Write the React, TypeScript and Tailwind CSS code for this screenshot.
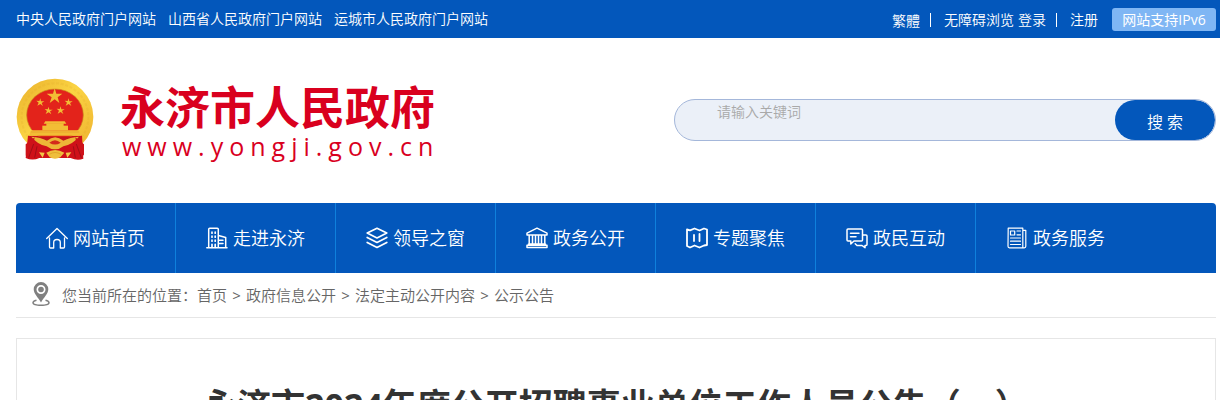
import type { ReactNode } from "react";

const portals = ["中央人民政府门户网站", "山西省人民政府门户网站", "运城市人民政府门户网站"];

function Emblem() {
  return (
    <svg width="78" height="82" viewBox="48 37 234 246" aria-hidden="true">
      <defs>
        <linearGradient id="gold" x1="0" y1="0" x2="1" y2="1">
          <stop offset="0" stopColor="#e9b02c" />
          <stop offset="0.45" stopColor="#fbd443" />
          <stop offset="1" stopColor="#eeb02e" />
        </linearGradient>
      </defs>
      <ellipse cx="165" cy="154" rx="115" ry="115" fill="url(#gold)" />
      <ellipse cx="165" cy="154" rx="100" ry="101" fill="none" stroke="#d99a20" strokeWidth="6" strokeDasharray="9 5" opacity="0.15" />
      <path d="M84 210 L246 210 L250 279 Q232 286 212 277 L118 277 Q98 286 77 277 Z" fill="#cf1019" />
      <ellipse cx="165" cy="148" rx="85" ry="78" fill="#e3231b" stroke="#c98a1b" strokeWidth="2" />
      <g fill="#f2bd35">
        <path d="M164 67 L169 84 L187 84 L173 95 L178 112 L164 101 L149 112 L155 95 L140 84 L159 84 Z" />
        <path id="small-star" d="M121 98 L123 107 L133 107 L125 112 L129 121 L121 115 L112 120 L116 111 L109 105 L118 106 Z" />
        <use href="#small-star" x="85" />
        <use href="#small-star" x="25" y="25" />
        <use href="#small-star" x="61" y="24" />
        <path d="M136 167 H194 L199 174 H131 Z" />
        <path d="M139 173 H191 V181 H139 Z" />
        <path d="M127 180 H204 V194 H127 Z" />
        <path d="M94 194 H236 L243 210 H87 Z" />
      </g>
      <path d="M92 199 H238" stroke="#e79a2a" strokeWidth="2" />
      <path d="M86 213 H245 L238 225 H92 Z" fill="#c4151b" />
      <path d="M94 213 Q122 215 141 225 Q165 204 190 225 Q210 215 237 213 Q218 236 190 242 Q177 252 165 251 Q153 252 140 242 Q113 237 94 213 Z" fill="#edb637" />
      <path d="M148 231 Q165 216 182 231 Q165 242 148 231 Z" fill="#d42a1b" />
      <path d="M77 236 L104 215 Q101 252 77 270 Z M252 236 L226 215 Q229 252 252 270 Z" fill="#ce1219" />
      <path d="M86 276 L101 235 M104 276 L111 242 M226 276 L220 242 M244 276 L229 235" stroke="#9f0e16" strokeWidth="3" />
      <path d="M117 260 L134 261 L128 276 Z M214 260 L197 261 L202 276 Z" fill="#f2c747" />
      <path d="M139 261 Q165 245 193 261 L181 275 Q165 283 149 275 Z" fill="#efbe3c" />
      <path d="M148 266 Q165 255 183 266" fill="none" stroke="#d99a20" strokeWidth="2" />
    </svg>
  );
}

function NavIcon({ children }: { children: ReactNode }) {
  return (
    <svg width="22" height="22" viewBox="0 0 22 22" fill="none" stroke="currentColor" strokeWidth="1.3" strokeLinejoin="round" strokeLinecap="round" aria-hidden="true">
      {children}
    </svg>
  );
}

const nav: { label: string; icon: ReactNode }[] = [
  {
    label: "网站首页",
    icon: <path d="M.7 11.5 11 1.5 21.3 11.5M3.5 10.8V20c0 .7.3 1 1 1h3.2v-5.5c0-2 1.2-3 3.3-3s3.3 1 3.3 3V21h3.2c.7 0 1-.3 1-1v-9.2" />,
  },
  {
    label: "走进永济",
    icon: (
      <>
        <path d="M.8 20.7H21M2.7 20.5V2.3c0-.7.3-1 1-1h7.6c.7 0 1 .3 1 1v18.2M12.5 8.500l7.200 2v10M13.500 13.200h3.500M13.500 16.500h3.500" strokeWidth="1.500" />
        <path d="M6 5.2v1M9.2 5.2v1M6 9.2v1M9.2 9.2v1M6 13.2v1M9.2 13.2v1M6 17.3v3M9.2 17.3v3" strokeWidth="1.7" />
      </>
    ),
  },
  {
    label: "领导之窗",
    icon: <path d="M11 1.3 20.8 6 11 11 1.2 6ZM1.2 10.5 11 15.5 20.8 10.5M1.2 15.5 11 20.5 20.8 15.5" strokeWidth="1.7" />,
  },
  {
    label: "政务公开",
    icon: <path d="M1 6.2 11 1.2 21 6.2V8H1ZM3.2 8v9M6.5 8v9M9.5 8v9M12.5 8v9M15.5 8v9M18.8 8v9M2.5 17h17M1 20.5v-2.2h20v2.2Z" strokeWidth="1.5" />,
  },
  {
    label: "专题聚焦",
    icon: <path d="M1 2.3 4 3.3 8.5 1.5l5 2 4.500-2 3 1V18l-3 .500-4.500 2-5-2-4.500 2L1 19ZM8 8v6M13.500 7v7" strokeWidth="1.8" />,
  },
  {
    label: "政民互动",
    icon: <path d="M2 2h13.5c.7 0 1 .3 1 1v10c0 .7-.3 1-1 1H8l-3.2 3v-3H2c-.7 0-1-.3-1-1V3c0-.7.3-1 1-1ZM4.5 6.2H13M4.5 9.8H10M16.7 8H20c.7 0 1 .3 1 1v8.5c0 .7-.3 1-1 1h-1v2.2l-3-2.2h-5l-1.8-1.7" strokeWidth="1.5" />,
  },
  {
    label: "政务服务",
    icon: <path d="M2.2 1.2h14.6V20.8H3.5c-1 0-1.5-.5-1.5-1.5ZM16.8 3.3h3v16c0 1-.5 1.5-1.5 1.5h-2M4.5 4h4.2v4H4.5ZM11 4h3.5M11 7.8h3.5M4.5 11h10M4.5 14.2h10M4.5 17.5h10" strokeWidth="1.2" />,
  },
];

function LocationIcon() {
  return (
    <svg width="18" height="24" viewBox="0 0 18 24" fill="#808080" aria-hidden="true">
      <path fillRule="evenodd" d="M9 0a7.3 7.3 0 0 0-7.3 7.3C1.7 11.5 6 15.5 9 20.5 12 15.5 16.3 11.5 16.3 7.3A7.3 7.3 0 0 0 9 0Zm0 3a4.500 4.500 0 1 1 0 9 4.500 4.500 0 0 1 0-9Z" />
      <circle cx="9" cy="7.5" r="2.8" />
      <path d="M4.5 18.3C2.5 18.8 1 19.6 1 20.8 1 22.3 4.5 23.3 9 23.3s8-1 8-2.5c0-1.2-1.5-2-3.5-2.5" fill="none" stroke="#808080" strokeWidth="1.5" />
    </svg>
  );
}

const crumbs = ["首页", "政府信息公开", "法定主动公开内容", "公示公告"];

export default function App() {
  return (
    <div className="bg-white font-['Open_Sans','Noto_Sans_CJK_SC',sans-serif] font-[350]">
      <div className="flex h-[38px] items-center justify-between bg-[#0357bb] pr-1 pl-4 text-sm text-white">
        <nav className="flex gap-3" aria-label="上级政府网站">
          {portals.map((p) => (
            <a key={p} href="#">{p}</a>
          ))}
        </nav>
        <div className="flex items-center pt-px">
          <a href="#" className="font-['Noto_Sans_CJK_TC',sans-serif] leading-5">繁體</a>
          <span className="ml-2.5 h-3.5 border-r border-white" />
          <a href="#" className="ml-[13px]">无障碍浏览</a>
          <a href="#" className="ml-1">登录</a>
          <span className="ml-2.5 h-3.5 border-r border-white" />
          <a href="#" className="ml-[13px]">注册</a>
          <a href="#" className="ml-3.5 flex h-[23px] w-[104px] items-center justify-center rounded-[3px] bg-[#7fb6f4] font-normal">网站支持IPv6</a>
        </div>
      </div>

      <div className="pr-1 pl-4">
        <header className="flex h-[165px] items-start justify-between">
          <a href="#" className="flex pt-10 text-[#d9001e]">
            <Emblem />
            <span className="flex flex-col pt-1 pl-[26px]">
              <span className="text-[45px] leading-[52px] font-bold">永济市人民政府</span>
              <span className="pl-0.5 text-[25px] leading-6 font-normal tracking-[6px]">www.yongji.gov.cn</span>
            </span>
          </a>
          <form className="mt-[61px] flex h-[42px] w-[542px] overflow-hidden rounded-full border border-[#a4b7da] bg-[#ebf0f8]" onSubmit={(e) => e.preventDefault()}>
            <input type="text" aria-label="请输入关键词" placeholder="请输入关键词" className="h-[22px] min-w-0 flex-1 bg-transparent pl-[42px] text-sm text-gray-700 outline-none placeholder:text-[#a9a9a9]" />
            <button type="submit" className="w-[100px] rounded-full bg-[#0357bb] pt-1 text-base text-white">搜 索</button>
          </form>
        </header>

        <nav className="flex h-[70px] rounded-t bg-[#0357bb] text-lg text-white" aria-label="主导航">
          {nav.map((n, i) => (
            <a key={n.label} href="#" className={`flex w-40 items-center gap-[5px] pl-[30px] ${i < nav.length - 1 ? "border-r border-r-[#0f80dc]" : ""}`}>
              <NavIcon>{n.icon}</NavIcon>
              <span>{n.label}</span>
            </a>
          ))}
        </nav>

        <nav className="flex h-[45px] items-center border-b border-[#e6e6e6] pl-4 text-[15px] text-[#666]" aria-label="面包屑">
          <span className="pb-0.5"><LocationIcon /></span>
          <span className="pl-3">您当前所在的位置：</span>
          {crumbs.map((c, i) => (
            <span key={c} className="flex">
              {i > 0 && <span className="w-[19px] text-center font-normal">&gt;</span>}
              <a href="#">{c}</a>
            </span>
          ))}
        </nav>

        <main className="mt-5 border border-[#e6e6e6] px-8 pt-10 pb-10">
          <h1 className="text-center text-[34px] leading-[52px] font-bold text-[#333]">永济市2024年度公开招聘事业单位工作人员公告（一）</h1>
        </main>
      </div>
    </div>
  );
}
